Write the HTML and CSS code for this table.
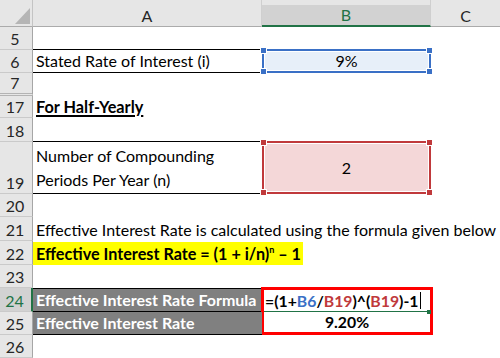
FILE: index.html
```html
<!DOCTYPE html>
<html>
<head>
<meta charset="utf-8">
<link rel="stylesheet" href="styles.css">
</head>
<body>
<div class="sheet">
  <!-- header row -->
  <div class="corner"><svg width="33" height="22" viewBox="0 0 33 22"><polygon points="15,19 30,19 30,3" fill="#b5b5b5"/></svg></div>
  <div class="colhead">A</div>
  <div class="colhead sel">B</div>
  <div class="colhead last">C</div>

  <!-- row 5 -->
  <div class="rowhead">5</div>
  <div class="cell"></div><div class="cell"></div><div class="cell"></div>

  <!-- row 6 -->
  <div class="rowhead">6</div>
  <div class="cell boxed">Stated Rate of Interest (i)</div>
  <div class="cell pick blue"><span class="pick-fill">9%</span><i class="h tl"></i><i class="h tr"></i><i class="h bl"></i><i class="h br"></i></div>
  <div class="cell"></div>

  <!-- row 7 -->
  <div class="rowhead hidden-after">7</div>
  <div class="cell"></div><div class="cell"></div><div class="cell"></div>

  <!-- row 17 -->
  <div class="rowhead">17</div>
  <div class="cell"><span class="title">For Half-Yearly</span></div>
  <div class="cell"></div><div class="cell"></div>

  <!-- row 18 -->
  <div class="rowhead">18</div>
  <div class="cell"></div><div class="cell"></div><div class="cell"></div>

  <!-- row 19 -->
  <div class="rowhead">19</div>
  <div class="cell boxed wrap">Number of Compounding Periods Per Year (n)</div>
  <div class="cell pick red"><span class="pick-fill">2</span><i class="h tl"></i><i class="h tr"></i><i class="h bl"></i><i class="h br"></i></div>
  <div class="cell"></div>

  <!-- row 20 -->
  <div class="rowhead">20</div>
  <div class="cell"></div><div class="cell"></div><div class="cell"></div>

  <!-- row 21 -->
  <div class="rowhead">21</div>
  <div class="cell span3">Effective Interest Rate is calculated using the formula given below</div>

  <!-- row 22 -->
  <div class="rowhead">22</div>
  <div class="cell span3 hl-row"><span class="hl">Effective Interest Rate = (1 + i/n)<sup>n</sup> – 1</span></div>

  <!-- row 23 -->
  <div class="rowhead">23</div>
  <div class="cell"></div><div class="cell"></div><div class="cell"></div>

  <!-- row 24 -->
  <div class="rowhead active">24</div>
  <div class="cell dark first">Effective Interest Rate Formula</div>
  <div class="result">
    <div class="formula">=(1+<span class="ref-b">B6</span>/<span class="ref-r">B19</span>)^(<span class="ref-r">B19</span>)-1<span class="caret"></span></div>
    <div class="edit-line"><i class="fill-handle"></i></div>
    <div class="value">9.20%</div>
  </div>
  <div class="cell"></div>

  <!-- row 25 -->
  <div class="rowhead">25</div>
  <div class="cell dark">Effective Interest Rate</div>
  <div class="cell"></div>

  <!-- row 26 -->
  <div class="rowhead">26</div>
  <div class="cell"></div><div class="cell"></div><div class="cell"></div>
</div>
</body>
</html>
```

FILE: styles.css
```css
html, body {
  margin: 0;
  padding: 0;
  background: #ffffff;
}

.sheet {
  display: grid;
  grid-template-columns: 33px 229px 169px 69px;
  grid-template-rows: 27px 23px 23px 23px 22px 24px 52px 23px 24px 24px 23px 24px 23px 23px;
  width: 500px;
  height: 358px;
  overflow: hidden;
  font-family: Lato, "Open Sans", sans-serif;
  font-size: 16px;
  color: #000;
}

.corner {
  background: #e6e6e6;
  border-right: 1px solid #c4c4c4;
  border-bottom: 1px solid #ababab;
  padding-top: 5px;
  box-sizing: border-box;
}
.corner svg { display: block; }

.colhead {
  background: #e6e6e6;
  border-bottom: 1px solid #ababab;
  border-right: 1px solid #cfcfcf;
  box-sizing: border-box;
  padding-top: 5px;
  display: flex;
  flex-direction: column;
  justify-content: flex-end;
  text-align: center;
  line-height: 21px;
  font-size: 16px;
  color: #262626;
}
.colhead.last { border-right: none; }
.colhead.sel {
  background: linear-gradient(#e6e6e6 0 5px, #d2d2d2 5px);
  color: #217346;
  border-bottom: 2px solid #217346;
  line-height: 20px;
}

.rowhead {
  background: #e6e6e6;
  border-right: 1px solid #a6a6a6;
  border-bottom: 1px solid #cacaca;
  box-sizing: border-box;
  display: flex;
  align-items: flex-end;
  justify-content: center;
  font-size: 16px;
  color: #262626;
  line-height: 20px;
  padding-right: 2px;
}
.rowhead.hidden-after {
  border-bottom: 3px double #b3b3b3;
}
.rowhead.active {
  background: #d2d2d2;
  color: #217346;
  border-right: 2px solid #217346;
}

.cell {
  box-sizing: border-box;
  padding: 0 3px 1px;
  display: flex;
  align-items: flex-end;
  white-space: nowrap;
  line-height: 20px;
  min-width: 0;
}
.cell.span3 { grid-column: span 3; }

.cell.boxed {
  border-top: 1px solid #000;
  border-bottom: 1px solid #000;
  margin-top: -1px;
}
.cell.wrap {
  white-space: normal;
  line-height: 24px;
  padding-bottom: 1px;
  padding-right: 30px;
}

.title {
  font-weight: 700;
  font-size: 16.3px;
  text-decoration: underline;
  text-decoration-thickness: 2px;
  text-underline-offset: 2px;
}

.hl-row { padding-left: 0; padding-bottom: 0; }
.hl {
  background: #ffff00;
  font-weight: 700;
  font-size: 16.2px;
  padding: 1px 2px 1px 3px;
  line-height: 21px;
}
.hl sup {
  font-size: 9px;
  vertical-align: 7px;
  line-height: 0;
}

.pick {
  position: relative;
  margin: -1px 0 0 0;
  padding: 0;
  border: 2px solid;
  justify-content: center;
  align-items: stretch;
}
.pick-fill {
  flex: 1;
  display: flex;
  align-items: center;
  justify-content: center;
  border: 1px solid #fff;
}
.pick.blue { border-color: #3a70c6; }
.pick.blue .pick-fill { background: #e7eff9; }
.pick.red { border-color: #c0393b; }
.pick.red .pick-fill { background: #f4d7d8; }
.h {
  position: absolute;
  width: 5px;
  height: 5px;
  border: 1px solid #fff;
}
.pick.blue .h { background: #3a70c6; }
.pick.red .h { background: #c0393b; }
.h.tl { left: -4px; top: -4px; }
.h.tr { right: -4px; top: -4px; }
.h.bl { left: -4px; bottom: -4px; }
.h.br { right: -4px; bottom: -4px; }

.cell.dark {
  background: #808080;
  color: #fff;
  font-weight: 700;
  font-size: 16px;
  border-bottom: 1px solid #000;
}
.cell.dark.first { border-top: 1px solid #000; }

.result {
  grid-row: span 2;
  margin: -1px -2px 0 -1px;
  border: 3px solid #ff0000;
  display: flex;
  flex-direction: column;
  font-weight: 700;
  font-size: 15.8px;
  background: #fff;
}
.formula {
  height: 21px;
  line-height: 21px;
  padding-left: 1px;
  display: flex;
  align-items: center;
  white-space: nowrap;
}
.ref-b { color: #3a70c6; }
.ref-r { color: #c0393b; }
.caret {
  display: inline-block;
  width: 1px;
  height: 17px;
  background: #000;
  margin-left: 2px;
}
.edit-line {
  height: 2px;
  background: #217346;
  margin-right: 2px;
  position: relative;
}
.fill-handle {
  position: absolute;
  right: -3px;
  top: -1px;
  width: 4px;
  height: 4px;
  background: #217346;
}
.value {
  flex: 1;
  text-align: center;
  line-height: 20px;
}
```
